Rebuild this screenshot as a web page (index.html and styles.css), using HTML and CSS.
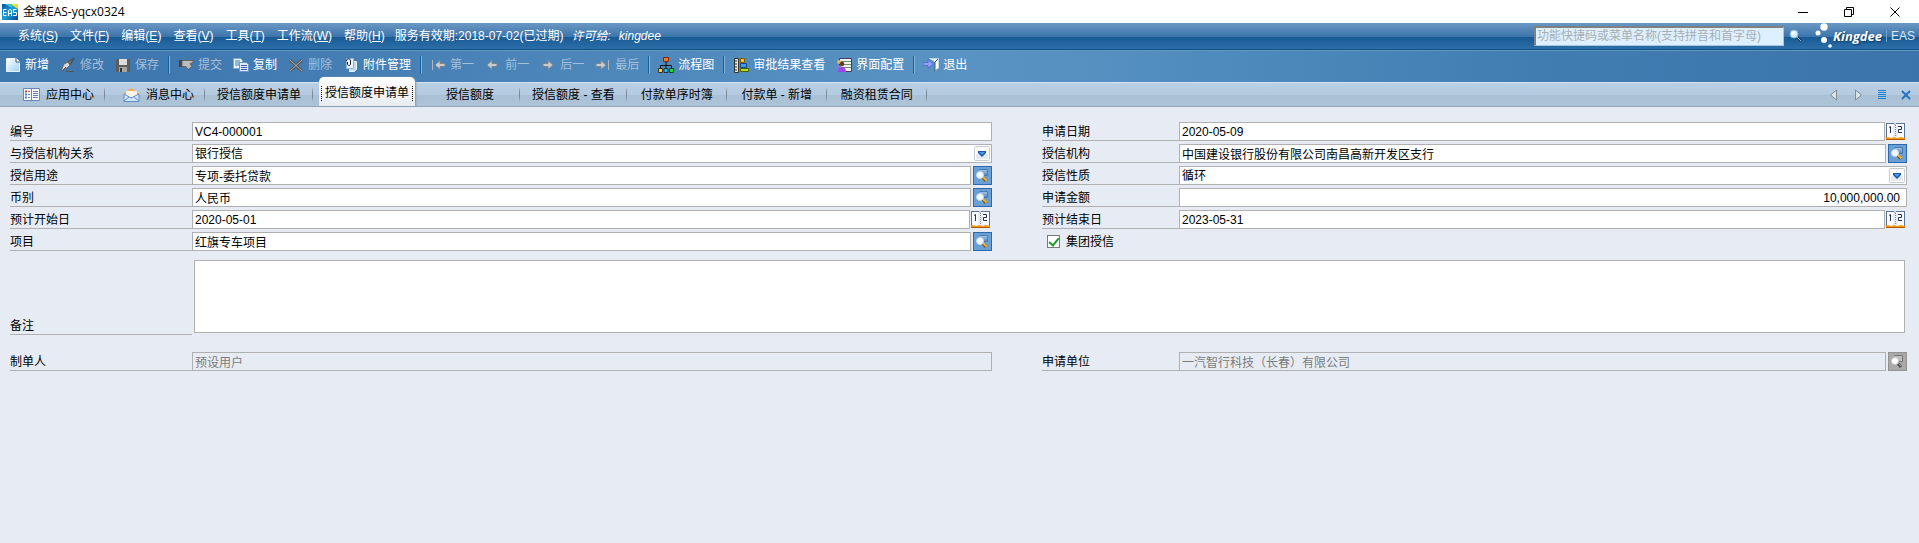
FILE: index.html
```html
<!DOCTYPE html>
<html lang="zh-CN">
<head>
<meta charset="utf-8">
<title>金蝶EAS-yqcx0324</title>
<link rel="stylesheet" href="styles.css">
</head>
<body>
<svg class="defs" aria-hidden="true">
  <defs>
    <linearGradient id="blueGlass" x1="0" y1="0" x2="0" y2="1"><stop offset="0" stop-color="#a9c6e6"/><stop offset="1" stop-color="#4f86c4"/></linearGradient>
    <linearGradient id="page" x1="0" y1="0" x2="1" y2="1"><stop offset="0" stop-color="#fff"/><stop offset="1" stop-color="#9fd2f5"/></linearGradient>
    <linearGradient id="logoBg" x1="0" y1="0" x2="1" y2="1"><stop offset="0" stop-color="#0a4fa8"/><stop offset=".5" stop-color="#19a5d8"/><stop offset="1" stop-color="#0d3f92"/></linearGradient>
    <symbol id="lookup" viewBox="0 0 17 17">
      <path d="M5.500 2.500h8v6h-5" fill="url(#blueGlass)" stroke="#4a7ab2"/>
      <path d="M8.500 10l3.500 4" stroke="#7a4e10" stroke-width="3"/><path d="M9 10l3.500 3.500" stroke="#f0b429" stroke-width="2"/>
      <circle cx="6" cy="8" r="3.500" fill="#f4faff" stroke="#c4d6ea"/>
    </symbol>
    <symbol id="lookup-off" viewBox="0 0 17 17">
      <path d="M5.500 2.500h8v6h-5" fill="#bdbdbd" stroke="#777"/>
      <path d="M8.500 10l3.500 4" stroke="#555" stroke-width="3"/><path d="M9 10l3 3" stroke="#999"/>
      <circle cx="6" cy="8" r="3.500" fill="#fff" stroke="#ccc"/>
    </symbol>
    <symbol id="calendar" viewBox="0 0 19 17">
      <path d="M1 0h7l1 1 1-1h8v15H1z" fill="#fbfcfe"/>
      <path d="M.5 0v16M18.500 0v16" stroke="#5c7391"/>
      <path d="M0 .5h8l1 1 1-1h9" fill="none" stroke="#5c7391"/>
      <path d="M8 2v12M11 2v12" stroke="#d6dbe3"/><path d="M9.500 2v12" stroke="#7b8593" stroke-dasharray="1 1"/>
      <path d="M0 14.500l2-.5 3 1 4-1 2 1 4-1 4 1v2H0z" fill="#f39a10"/><path d="M0 16.500h19" stroke="#b05a08"/>
      <path d="M3 4.500l1.500-1V10M12 3.500h3.500v3h-3v3H16" fill="none" stroke="#26305e"/>
    </symbol>
    <symbol id="drop" viewBox="0 0 16 15">
      <rect x=".5" y=".5" width="15" height="14" rx="1" fill="#fff" stroke="#c4cad4"/><path d="M2 8h12v5H2z" fill="#e4e9f2"/>
      <path d="M4 5h8v2l-4 4-4-4z" fill="#1a55ae"/><path d="M5 6h6l-3 3z" fill="#4a9cf0"/>
    </symbol>
    <symbol id="arrow" viewBox="0 0 12 12"><path d="M1 6l5-4.500v3h5v3H6v3z" fill="#c9cbce" stroke="#7d858e"/></symbol>
  </defs>
</svg>

<header class="titlebar">
  <svg class="app-icon" viewBox="0 0 16 16" aria-hidden="true"><rect width="16" height="16" fill="url(#logoBg)"/><path d="M8 0h8v5z" fill="#e8e03a"/><path d="M3 0h7v4z" fill="#3fc6c0"/><path d="M4.500 5.500h-3v6h3M1.500 8.500h3M6.500 12V7l1-1.500h1l1 1.500v5M6.500 9.500h3M14.500 5.500h-3v3h3v3h-3.500" fill="none" stroke="#fff"/></svg>
  <h1 class="title">金蝶EAS-yqcx0324</h1>
  <div class="window-buttons">
    <button type="button" aria-label="最小化"><svg viewBox="0 0 12 12"><path d="M1 6.500h10"/></svg></button>
    <button type="button" aria-label="还原"><svg viewBox="0 0 12 12"><path d="M1.500 3.500h7v7h-7zM3.500 3V1.500h7v7H9"/></svg></button>
    <button type="button" aria-label="关闭"><svg viewBox="0 0 12 12"><path d="M1.500 1.500l9 9M10.500 1.500l-9 9"/></svg></button>
  </div>
</header>

<nav class="menubar">
  <button type="button">系统(<u>S</u>)</button>
  <button type="button">文件(<u>F</u>)</button>
  <button type="button">编辑(<u>E</u>)</button>
  <button type="button">查看(<u>V</u>)</button>
  <button type="button">工具(<u>T</u>)</button>
  <button type="button">工作流(<u>W</u>)</button>
  <button type="button">帮助(<u>H</u>)</button>
  <p class="license">服务有效期:2018-07-02(已过期)<i>许可给:</i><i>kingdee</i></p>
  <div class="search">
    <input type="text" aria-label="功能搜索" placeholder="功能快捷码或菜单名称(支持拼音和首字母)">
    <button type="button" aria-label="搜索"><svg viewBox="0 0 14 14"><path d="M8 8l4 4" stroke="#1b3f6e" stroke-width="3"/><path d="M8 8l4 4" stroke="#9db9d6"/><circle cx="5" cy="5" r="4" fill="#d8efff" stroke="#7fb4de"/><circle cx="4" cy="4" r="1.500" fill="#fff"/></svg></button>
  </div>
  <div class="brand">
    <svg viewBox="0 0 18 26" aria-hidden="true"><g fill="#fff"><circle cx="9" cy="4" r="3.700"/><circle cx="3" cy="10" r="2.500"/><circle cx="9" cy="17" r="3"/><circle cx="15" cy="23" r="1.800"/></g></svg>
    <b>Kingdee</b><span>EAS</span>
  </div>
</nav>

<div class="toolbar" role="toolbar">
  <button type="button"><svg viewBox="0 0 16 16"><path d="M1.500 1.500h10l3 3v10h-13z" fill="url(#page)" stroke="#e6f4ff"/><path d="M11 1v4h4" fill="#fff" stroke="#2d5f94"/></svg>新增</button>
  <button type="button" disabled><svg viewBox="0 0 16 16"><path d="M14 1L8 5l2 3z" fill="#777" stroke="#444"/><path d="M8 5L4 7l-3 7 6-3 3-3z" fill="#d9d9d9" stroke="#666"/><path d="M2 14l4-4M6 14.500h8" stroke="#555"/></svg>修改</button>
  <button type="button" disabled><svg viewBox="0 0 16 16"><path d="M1 2h14v13H1z" fill="#5d5d5d"/><path d="M4 2h8v6H4z" fill="#ddd"/><path d="M4 10h8v5H4z" fill="#a5a5a5"/><path d="M5 11h2v4H5z" fill="#333"/></svg>保存</button>
  <span class="sep"></span>
  <button type="button" disabled><svg viewBox="0 0 16 16"><path d="M1 3h4v7H1z" fill="#444"/><path d="M4 3.500h11v2l-3 1 2 3-4 3-2-3H4z" fill="#bcbcbc" stroke="#666"/></svg>提交</button>
  <button type="button"><svg viewBox="0 0 16 16"><path d="M.5 1.500h7l2 2v8h-9z" fill="#e9f4ff" stroke="#7ea6d6"/><path d="M2 4h5M2 6h5M2 8h5" stroke="#3b78c0"/><path d="M6.500 5.500h7l2 2v7h-9z" fill="#dbe9ff" stroke="#6c93cc"/><path d="M8 8.500h6M8 10.500h6M8 12.500h6" stroke="#3d5fae"/></svg>复制</button>
  <button type="button" disabled><svg viewBox="0 0 16 16"><path d="M2 3l12 11M14 3L2 14" stroke="#56595c" stroke-width="3"/><path d="M2 3l12 11M14 3L2 14" stroke="#adadad"/></svg>删除</button>
  <button type="button"><svg viewBox="0 0 16 16"><path d="M6.500 4.500h7v8l-2 2h-5z" fill="#c3dcf5" stroke="#e9f5ff"/><path d="M3.500 1.500h7v10h-7z" fill="#eef6fd" stroke="#8fb2d6"/><path d="M3.500 4c0-3 4-3 4 0v3c0 2-3 2-3 0V5" fill="none" stroke="#222"/></svg>附件管理</button>
  <span class="sep"></span>
  <button type="button" disabled><svg viewBox="0 0 16 16"><path d="M2.500 3v10" stroke="#aeb6bd"/><use href="#arrow" x="4" y="2" width="12" height="12"/></svg>第一</button>
  <button type="button" disabled><svg viewBox="0 0 16 16"><use href="#arrow" x="1" y="2" width="12" height="12"/></svg>前一</button>
  <button type="button" disabled><svg viewBox="0 0 16 16"><g transform="matrix(-1 0 0 1 16 0)"><use href="#arrow" x="2" y="2" width="12" height="12"/></g></svg>后一</button>
  <button type="button" disabled><svg viewBox="0 0 16 16"><g transform="matrix(-1 0 0 1 16 0)"><path d="M2.500 3v10" stroke="#aeb6bd"/><use href="#arrow" x="4" y="2" width="12" height="12"/></g></svg>最后</button>
  <span class="sep"></span>
  <button type="button"><svg viewBox="0 0 16 16"><path d="M8 5v3M2.500 11V8.500h11V11M8 8v3" fill="none" stroke="#111"/><path d="M5.500.5h5v4h-5z" fill="#f47c1c" stroke="#7c2a05"/><path d="M.5 11.500h4v4h-4z" fill="#ffd21c" stroke="#333"/><path d="M6 11.500h4v4H6z" fill="#20b8f0" stroke="#234"/><path d="M11.500 11.500h4v4h-4z" fill="#25dd25" stroke="#143"/></svg>流程图</button>
  <span class="sep"></span>
  <button type="button"><svg viewBox="0 0 16 16"><path d="M1.500 1.500h4v14h-4z" fill="#e8e6c9" stroke="#333"/><path d="M2 4h2M2 7h2M2 10h2M2 13h2" stroke="#333"/><path d="M7.500 1.500h4v4h-4z" fill="#f6c61c" stroke="#7a5205"/><path d="M7.500 6.500h6v4h-6z" fill="#3b9bea" stroke="#134b84"/><path d="M7.500 11.500h8v3h-8z" fill="#b7dc22" stroke="#485f05"/></svg>审批结果查看</button>
  <button type="button"><svg viewBox="0 0 16 16"><path d="M3.500 1.500h12v13h-12z" fill="#edf4ea" stroke="#536"/><path d="M5 4.500h10M5 7.500h10M5 10.500h10" stroke="#6c8b70"/><circle cx="3" cy="5" r="2" fill="#e6b070"/><path d="M0 12c0-5 6-5 6 0z" fill="#7783c9"/><circle cx="6" cy="7" r="2.300" fill="#6b3a1a"/><path d="M2 15c0-7 8-7 8 0z" fill="#a144f0"/></svg>界面配置</button>
  <span class="sep"></span>
  <button type="button"><svg viewBox="0 0 16 16"><path d="M6.500 1.500h9v10l-3 3V5z" fill="#e5f4fb" stroke="#b9d8ea"/><path d="M15 2l-3 3v9.500l3-3" fill="#fff" stroke="#335d80"/><path d="M0 5.500h5v-3L10.500 7 5 11.500v-3H0z" fill="#8d9df5" stroke="#5a6ccc"/></svg>退出</button>
</div>

<nav class="tabs">
  <button type="button" class="tab with-icon"><svg viewBox="0 0 17 14"><path d="M.5.5h16v12H.5z" fill="#f8fbff" stroke="#6d86b5"/><path d="M8.500 1v12" stroke="#7186ac"/><path d="M2 3.500h2" stroke="#e0401c" stroke-width="2"/><path d="M2 6.500h2M2 9.500h2" stroke="#4f7fd0" stroke-width="2"/><path d="M5 3.500h2M5 6.500h2M5 9.500h2M10 3.500h5M10 5.500h5M10 7.500h5M10 9.500h5" stroke="#5f7db8"/></svg>应用中心</button>
  <button type="button" class="tab with-icon"><svg viewBox="0 0 17 14"><path d="M1 5l7-5 8 5v9H1z" fill="#f2b052"/><path d="M3 3h11v6H3z" fill="#fff5e6"/><path d="M1 6l7 4 8-4v7.500H1z" fill="#cfe4fb" stroke="#5f8fd0"/><path d="M1 13l5-4M16 13l-5-4" stroke="#5f8fd0"/></svg>消息中心</button>
  <button type="button" class="tab">授信额度申请单</button>
  <button type="button" class="tab active" aria-current="page">授信额度申请单</button>
  <button type="button" class="tab">授信额度</button>
  <button type="button" class="tab">授信额度 - 查看</button>
  <button type="button" class="tab">付款单序时簿</button>
  <button type="button" class="tab">付款单 - 新增</button>
  <button type="button" class="tab">融资租赁合同</button>
  <div class="tab-tools">
    <button type="button" aria-label="向左"><svg viewBox="0 0 12 12"><path d="M8.500 1v10l-6-5z" fill="#dbe3ea" stroke="#848c95"/></svg></button>
    <button type="button" aria-label="向右"><svg viewBox="0 0 12 12"><path d="M3.500 1v10l6-5z" fill="#dbe3ea" stroke="#848c95"/></svg></button>
    <button type="button" aria-label="列表"><svg viewBox="0 0 12 12"><path d="M2 1.500h8M2 3.500h8M2 5.500h8M2 7.500h8M2 9.500h8" stroke="#1f7fd4"/></svg></button>
    <button type="button" aria-label="关闭标签"><svg viewBox="0 0 12 12"><path d="M2 2l8 8M10 2l-8 8" stroke="#2674c4" stroke-width="2"/></svg></button>
  </div>
</nav>

<main>
  <form class="form">
    <div class="row left"><label for="no">编号</label><div class="field"><input id="no" type="text" value="VC4-000001"></div></div>
    <div class="row right"><label for="date">申请日期</label><div class="field date"><input id="date" type="text" value="2020-05-09"><button type="button" aria-label="选择日期"><svg><use href="#calendar"/></svg></button></div></div>

    <div class="row left"><label for="rel">与授信机构关系</label><div class="field choice"><select id="rel"><option>银行授信</option></select><svg><use href="#drop"/></svg></div></div>
    <div class="row right"><label for="org">授信机构</label><div class="field pick"><input id="org" type="text" value="中国建设银行股份有限公司南昌高新开发区支行"><button type="button" aria-label="查找"><svg><use href="#lookup"/></svg></button></div></div>

    <div class="row left"><label for="use">授信用途</label><div class="field pick"><input id="use" type="text" value="专项-委托贷款"><button type="button" aria-label="查找"><svg><use href="#lookup"/></svg></button></div></div>
    <div class="row right"><label for="kind">授信性质</label><div class="field choice"><select id="kind"><option>循环</option></select><svg><use href="#drop"/></svg></div></div>

    <div class="row left"><label for="cur">币别</label><div class="field pick"><input id="cur" type="text" value="人民币"><button type="button" aria-label="查找"><svg><use href="#lookup"/></svg></button></div></div>
    <div class="row right"><label for="amt">申请金额</label><div class="field"><input id="amt" class="amount" type="text" value="10,000,000.00"></div></div>

    <div class="row left"><label for="start">预计开始日</label><div class="field date"><input id="start" type="text" value="2020-05-01"><button type="button" aria-label="选择日期"><svg><use href="#calendar"/></svg></button></div></div>
    <div class="row right"><label for="end">预计结束日</label><div class="field date"><input id="end" type="text" value="2023-05-31"><button type="button" aria-label="选择日期"><svg><use href="#calendar"/></svg></button></div></div>

    <div class="row left"><label for="proj">项目</label><div class="field pick"><input id="proj" type="text" value="红旗专车项目"><button type="button" aria-label="查找"><svg><use href="#lookup"/></svg></button></div></div>
    <div class="check"><input id="group" type="checkbox" checked><label for="group">集团授信</label></div>

    <div class="row note"><label for="memo">备注</label><textarea id="memo"></textarea></div>

    <div class="row left"><label for="maker">制单人</label><div class="field"><input id="maker" type="text" value="预设用户" disabled></div></div>
    <div class="row right"><label for="unit">申请单位</label><div class="field pick"><input id="unit" type="text" value="一汽智行科技（长春）有限公司" disabled><button type="button" aria-label="查找" disabled><svg><use href="#lookup-off"/></svg></button></div></div>
  </form>
</main>
</body>
</html>
```
FILE: styles.css
```css
* { box-sizing: border-box; }

body {
  margin: 0;
  min-height: 100vh;
  background: #e7ecf4;
  color: #000;
  font: 12px/16px "Liberation Sans", "Noto Sans CJK SC", sans-serif;
}

button, input, select, textarea { font: inherit; color: inherit; margin: 0; }
button { padding: 0; border: 0; background: none; white-space: nowrap; }
svg { display: block; fill: none; flex: none; }
.defs { position: absolute; width: 0; height: 0; }

/* Title bar */
.titlebar { display: flex; align-items: center; gap: 5px; height: 23px; padding: 0 18px 0 2px; background: #fff; }
.app-icon { width: 16px; height: 16px; }
.title { margin: 0; font: 12px/18px "Open Sans", "Noto Sans CJK SC", sans-serif; }
.window-buttons { display: flex; gap: 34px; margin-left: auto; }
.window-buttons svg { width: 12px; height: 12px; stroke: #000; }

/* Menu bar */
.menubar {
  display: flex;
  align-items: center;
  gap: 12px;
  height: 28px;
  padding: 0 4px 2px 18px;
  border-bottom: 1px solid #5f9ac6;
  box-shadow: inset 0 -1px #14507f;
  background: linear-gradient(#6b98c4, #3b74ab 14px, #175a94 14px, #2f70aa);
  color: #fff;
}
.license { display: flex; gap: 8px; margin: 0 auto 0 -2px; white-space: nowrap; }
.search { display: flex; align-items: center; gap: 5px; }
.search input {
  width: 250px;
  height: 20px;
  padding: 0 1px;
  border: 1px solid #a9c6de;
  border-top: 2px solid #808080;
  border-left: 2px solid #808080;
  background: #dcf0ff;
}
.search input::placeholder { color: #a9aeb2; opacity: 1; }
.search svg { width: 14px; height: 14px; }
.brand { display: flex; align-items: center; font-size: 12px; }
.brand svg { width: 18px; height: 26px; }
.brand b { padding-right: 4px; border-right: 1px solid #6e9fc9; font: italic bold 13px/12px "Open Sans", sans-serif; text-shadow: 1px 1px 2px #0b3563; }
.brand span { padding-left: 4px; color: #d8e8f6; }

/* Toolbar */
.toolbar {
  display: flex;
  align-items: center;
  gap: 11px;
  height: 31px;
  padding: 0 5px 4px;
  background: linear-gradient(90deg, #3c77ae, #4079b0 10%, #5993c3 50%, #5590c1 57%, #427db2 80%, #3a74aa);
  color: #fff;
}
.toolbar button { display: flex; align-items: center; gap: 4px; }
.toolbar button:disabled { color: #a5bfd8; }
.toolbar svg { width: 16px; height: 16px; }
.sep { width: 1px; height: 17px; margin: 0 -2px; background: #14609e; box-shadow: 1px 0 #82b5da; }

/* Tabs */
.tabs {
  display: flex;
  height: 25px;
  padding: 0 7px 0 5px;
  border-top: 1px solid #d5e3f0;
  border-bottom: 1px solid #94a5b5;
  background: linear-gradient(#b8cfe4, #b3cae0 12px, #a9c0d5 12px, #adc4d8);
}
.tab {
  display: flex;
  align-items: center;
  justify-content: center;
  gap: 6px;
  min-width: 100px;
  padding: 0 11px 0 12px;
  border-right: 1px solid;
  border-image: linear-gradient(transparent 20%, #7d8b98 40%, #7d8b98 60%, transparent 80%) 1;
}
.tab.with-icon { padding: 0 10px 0 18px; }
.tab svg { width: 17px; height: 14px; }
.tab.active {
  position: relative;
  min-width: 0;
  margin: -6px 5px 0 6px;
  padding: 2px 6px 0;
  border: 0;
  border-radius: 5px 5px 0 0;
  background: linear-gradient(#fff, #f2f3f6 60%, #e7ecf2);
  box-shadow: 1px 0 2px #7f93a6;
}
.tab.active::before,
.tab.active::after { content: ""; position: absolute; top: 9px; bottom: 5px; left: 2px; border-left: 1px dotted #000; }
.tab.active::after { left: auto; right: 2px; }
.tab-tools { display: flex; align-items: center; gap: 12px; margin-left: auto; }
.tab-tools svg { width: 12px; height: 12px; }

/* Form */
.form {
  display: grid;
  grid-template-columns: 982fr 865fr;
  gap: 3px 50px;
  padding: 15px 12px 0 10px;
}
.row { display: grid; height: 19px; }
.left { grid-template-columns: 182px 1fr; }
.right { grid-template-columns: 137px 1fr; }
.row > label { display: flex; align-items: end; border-bottom: 1px solid #b0b0b0; }
.field { position: relative; display: flex; gap: 2px; min-width: 0; }
.field input, .field select, .note textarea {
  flex: 1;
  min-width: 0;
  height: 19px;
  padding: 0 2px;
  border: 1px solid #b0b0b0;
  border-radius: 0;
  background: #fff;
}
.field select { appearance: none; line-height: 16px; }
.field .amount { padding-right: 6px; text-align: right; }
.field input:disabled { background: #e7ecf4; color: #7b7b7b; }
.pick button { width: 19px; height: 19px; border: 1px solid #2b68ae; background: #6ba0d6; }
.pick button:disabled { border: 1px solid #929292; background: #a9a9a9; }
.pick svg { width: 17px; height: 17px; }
.date { gap: 1px; padding-right: 2px; }
.date button, .date svg { width: 19px; height: 17px; }
.date button { margin-top: 1px; }
.choice svg { position: absolute; top: 2px; right: 2px; width: 16px; height: 15px; pointer-events: none; }

.check { display: flex; align-items: center; gap: 6px; padding-left: 5px; }
.check input {
  appearance: none;
  width: 13px;
  height: 13px;
  border: 1px solid #7a7a7a;
  background: #fff;
}
.check input:checked::before {
  content: "";
  display: block;
  width: 4px;
  height: 8px;
  margin: 0 auto;
  border: solid #1d9a2c;
  border-width: 0 2px 2px 0;
  transform: rotate(40deg);
}

.note {
  grid-column: 1 / -1;
  grid-template-columns: 182px 1fr;
  height: auto;
  margin: 5px 0 14px;
  padding-top: 1px;
}
.note textarea { height: 73px; margin: 0 2px 2px; resize: none; }
```
